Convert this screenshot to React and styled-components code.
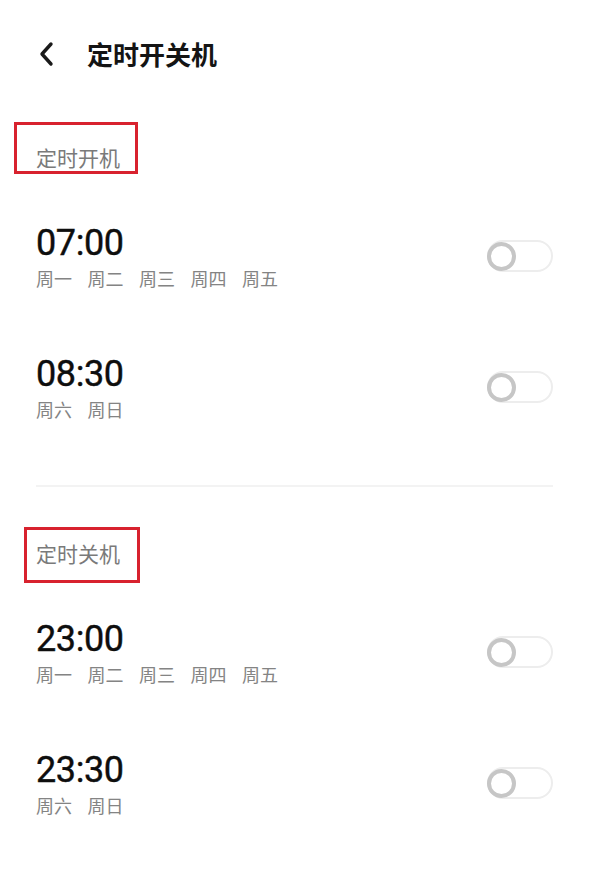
import React from "react";
import styled, { createGlobalStyle } from "styled-components";

const GlobalStyle = createGlobalStyle`
  html, body {
    margin: 0;
    padding: 0;
    background: #ffffff;
  }
  body {
    font-family: Roboto, "Noto Sans CJK SC", sans-serif;
  }
`;

const Page = styled.div`
  width: 600px;
  min-height: 876px;
  background: #ffffff;
  box-sizing: border-box;
  padding: 0 47px 0 36px;
`;

const Header = styled.div`
  height: 108px;
  display: flex;
  align-items: center;
`;

const BackButton = styled.div`
  width: 20px;
  height: 26px;
  display: flex;
  align-items: center;
  justify-content: center;
  color: #1a1a1a;
`;

const Title = styled.h1`
  margin: 0 0 0 31px;
  font-family: "Noto Sans CJK SC", sans-serif;
  font-size: 26px;
  line-height: 32px;
  font-weight: 700;
  color: #141414;
`;

const SectionTitle = styled.div`
  position: relative;
  margin-top: ${(p) => p.$top}px;
  margin-bottom: 50px;
  font-family: "Noto Sans CJK SC", sans-serif;
  font-size: 21px;
  line-height: 28px;
  color: #7a7a7a;
  width: 84px;
`;

const Marker = styled.div`
  position: absolute;
  left: ${(p) => p.$left}px;
  top: ${(p) => p.$top}px;
  width: ${(p) => p.$width}px;
  height: ${(p) => p.$height}px;
  border: 3px solid #d8222e;
  box-sizing: border-box;
  pointer-events: none;
`;

const RowList = styled.div`
  display: flex;
  flex-direction: column;
  gap: 62px;
`;

const Row = styled.div`
  display: flex;
  align-items: center;
  justify-content: space-between;
`;

const TimeBlock = styled.div`
  display: flex;
  flex-direction: column;
`;

const Time = styled.div`
  font-family: Roboto, sans-serif;
  font-size: 36px;
  line-height: 44px;
  font-weight: 400;
  color: #0e0e0e;
  letter-spacing: -0.4px;
  -webkit-text-stroke: 0.4px #0e0e0e;
`;

const Days = styled.div`
  display: flex;
  gap: 15.5px;
  margin-top: 1px;
  font-family: "Noto Sans CJK SC", sans-serif;
  font-size: 18px;
  line-height: 24px;
  color: #848484;
`;

const Track = styled.div`
  position: relative;
  width: 66px;
  height: 32px;
  border: 2px solid #ededed;
  border-radius: 16px;
  box-sizing: border-box;
  background: #ffffff;
`;

const Knob = styled.div`
  position: absolute;
  left: -2px;
  top: 50%;
  width: 29px;
  height: 29px;
  margin-top: -14px;
  border-radius: 50%;
  border: 4px solid #c6c6c6;
  box-sizing: border-box;
  background: #ffffff;
`;

const Divider = styled.div`
  height: 2px;
  background: #f3f3f3;
  margin: 64px 0 52px;
`;

const Toggle = () => (
  <Track>
    <Knob />
  </Track>
);

const Schedule = ({ time, days }) => (
  <Row>
    <TimeBlock>
      <Time>{time}</Time>
      <Days>
        {days.map((d) => (
          <span key={d}>{d}</span>
        ))}
      </Days>
    </TimeBlock>
    <Toggle />
  </Row>
);

const weekdays = ["周一", "周二", "周三", "周四", "周五"];
const weekend = ["周六", "周日"];

export default function App() {
  return (
    <Page>
      <GlobalStyle />
      <Header>
        <BackButton>
          <svg width="18" height="26" viewBox="0 0 18 26" fill="none">
            <path
              d="M14 3 L5 13 L14 23"
              stroke="currentColor"
              strokeWidth="3.4"
              strokeLinecap="round"
              strokeLinejoin="round"
            />
          </svg>
        </BackButton>
        <Title>定时开关机</Title>
      </Header>

      <SectionTitle $top={35}>
        定时开机
        <Marker $left={-22} $top={-21} $width={124} $height={52} />
      </SectionTitle>
      <RowList>
        <Schedule time="07:00" days={weekdays} />
        <Schedule time="08:30" days={weekend} />
      </RowList>

      <Divider />

      <SectionTitle $top={0}>
        定时关机
        <Marker $left={-12} $top={-12} $width={116} $height={56} />
      </SectionTitle>
      <RowList>
        <Schedule time="23:00" days={weekdays} />
        <Schedule time="23:30" days={weekend} />
      </RowList>
    </Page>
  );
}
